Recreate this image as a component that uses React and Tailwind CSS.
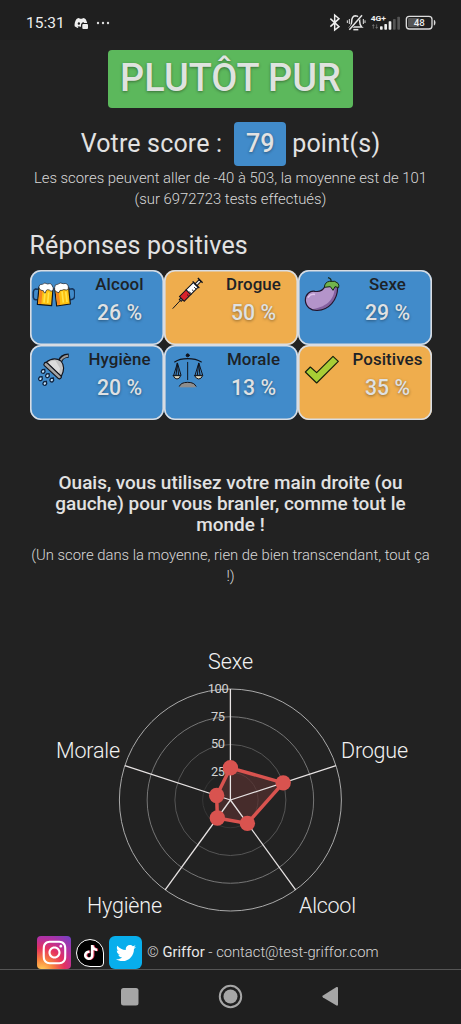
import React from "react";
import { FaTwitter, FaInstagram, FaTiktok, FaDiscord } from "react-icons/fa";

const ink = "#10131c";

const BeerIcon = () => (
  <svg viewBox="30 30 135 150" className="h-[50px] w-[45px] shrink-0">
    <g stroke={ink} strokeWidth="3.5" strokeLinejoin="round">
      <path d="M56 88 L46 87 Q41 88 40 96 L40 112 Q41 118 47 119 L54 119" fill="none" stroke="#14345c" strokeWidth="4.5" />
      <path d="M147 88 L157 86 Q163 87 164 95 L164 109 Q163 116 157 118 L150 119" fill="none" stroke="#14345c" strokeWidth="4.5" />
      <path d="M57 82 L99 86 L95 137 L52 133 Z" fill="#fdc211" />
      <path d="M104 86 L146 82 L151 132 L110 138 Z" fill="#fdc211" />
    </g>
    <path d="M59 90 L68 90 L64 132 L55 131 Z M107 95 L116 94 L121 134 L112 135 Z" fill="#f5871f" />
    <path d="M75 97 L72 128 M86 97 L83 129 M126 94 L130 128 M137 94 L141 126" stroke="#ffe34a" strokeWidth="5" />
    <path d="M57 84 Q56 72 67 73 Q74 66 83 72 Q94 68 97 78 Q102 83 99 91 Q93 97 88 90 Q82 87 78 92 L76 99 Q71 100 70 92 Q61 93 57 84 Z" fill="#fff" stroke={ink} strokeWidth="2" />
    <path d="M104 82 Q104 72 113 73 Q120 66 130 71 Q143 68 145 80 Q148 89 139 90 Q130 87 126 91 Q119 88 117 98 Q109 98 104 90 Z" fill="#fff" stroke={ink} strokeWidth="2" />
  </svg>
);

const SyringeIcon = () => (
  <svg viewBox="12 30 135 150" className="h-[50px] w-[45px] shrink-0">
    <path d="M38 146 L64 118" stroke={ink} strokeWidth="3" />
    <g transform="translate(62 120) rotate(-45)" stroke={ink} strokeWidth="3">
      <path d="M-2 -4 L6 -4 L6 4 L-2 4 Z" fill="#777" />
      <rect x="5" y="-10" width="28" height="20" fill="#d9232b" />
      <rect x="33" y="-10" width="31" height="20" fill="#fff" />
      <path d="M25 10 V2 M36 10 V1 M46 10 V2 M56 10 V1" strokeWidth="2.5" />
      <rect x="64" y="-4" width="18" height="8" fill="#eee" />
      <path d="M65 -14 V14 M83 -10 V10" strokeWidth="4" />
    </g>
  </svg>
);

const EggplantIcon = () => (
  <svg viewBox="24 30 135 150" className="h-[50px] w-[45px] shrink-0">
    <path d="M105 79 C99 92 88 96 75 94 C60 91 46 103 46 121 C47 141 63 152 82 151 C116 150 143 121 143 82 Z" fill="#b494ca" />
    <path d="M133 79 C137 114 112 141 70 147 C107 157 144 123 143 82 Z" fill="#84609f" />
    <path d="M55 111 Q62 101 73 103" fill="none" stroke="#dec2eb" strokeWidth="5" strokeLinecap="round" />
    <path d="M105 79 C99 92 88 96 75 94 C60 91 46 103 46 121 C47 141 63 152 82 151 C116 150 143 121 143 82" fill="none" stroke="#24152e" strokeWidth="3.5" />
    <path d="M103 82 Q104 66 119 64 Q137 61 144 70 Q148 75 146 83 L135 80 L129 91 L121 80 Z" fill="#72b34b" stroke="#152719" strokeWidth="3" strokeLinejoin="round" />
    <path d="M123 65 Q125 56 114 53" fill="none" stroke="#152719" strokeWidth="3.5" />
  </svg>
);

const ShowerIcon = () => (
  <svg viewBox="30 255 135 150" className="h-[50px] w-[45px] shrink-0">
    <path d="M120 305 Q124 287 146 287" fill="none" stroke={ink} strokeWidth="13" />
    <path d="M121 304 Q125 290 144 287" fill="none" stroke="#999" strokeWidth="6" />
    <path d="M78 307 Q102 288 123 303 Q138 321 124 349 Z" fill="#c4c4c4" stroke={ink} strokeWidth="3.5" />
    <path d="M84 309 Q96 300 107 303 L120 325 L117 340 Z" fill="#dcdcdc" />
    <path d="M73 310 Q76 305 82 309 L123 348 Q126 354 120 356 Q116 358 112 353 L73 317 Q70 314 73 310 Z" fill="#a4a4a4" stroke={ink} strokeWidth="3.5" />
    <g fill="#c3e3fa" stroke="#10233f" strokeWidth="4">
      {[[69, 334], [82, 347], [95, 360], [61, 356], [74, 370]].map(([x, y]) => (
        <path key={x} d={`M${x + 5} ${y - 6} L${x - 2} ${y - 5} Q${x - 8} ${y + 1} ${x - 3} ${y + 5} Q${x + 3} ${y + 8} ${x + 6} ${y + 1} Z`} />
      ))}
    </g>
  </svg>
);

const ScaleIcon = () => (
  <svg viewBox="12 255 135 150" className="h-[50px] w-[45px] shrink-0">
    <g stroke={ink} fill="none" strokeWidth="3" strokeLinecap="round">
      <circle cx="83" cy="286" r="4.5" fill={ink} />
      <path d="M44 306 Q59 296 83 296 Q108 296 124 306" strokeWidth="3.5" />
      <path d="M83 307 V359" />
      <path d="M52 310 L41 346 H62 Z M52 310 L48 346 M52 310 L56 346" />
      <path d="M116 310 L105 346 H127 Z M116 310 L112 346 M116 310 L120 346" />
      <path d="M40 347 H62 Q59 357 51 357 Q43 357 40 347 Z M104 347 H128 Q124 357 116 357 Q108 357 104 347 Z" fill="#ddd9c0" />
      <path d="M58 379 Q62 367 83 367 Q104 367 108 379" fill="#8d8d8d" />
    </g>
    <path d="M59 380 H107" stroke="#8d8d8d" strokeWidth="4" />
  </svg>
);

const CheckIcon = () => (
  <svg viewBox="24 255 135 150" className="h-[50px] w-[45px] shrink-0">
    <path d="M46 336 L61 321 L80 338 L129 289 L145 304 L80 369 Z" fill="#a7cd35" stroke="#18200c" strokeWidth="3.5" strokeLinejoin="round" />
  </svg>
);

const cells = [
  { name: "Alcool", value: 26, Icon: BeerIcon, tone: "bg-[#418bca]" },
  { name: "Drogue", value: 50, Icon: SyringeIcon, tone: "bg-[#efad4d]" },
  { name: "Sexe", value: 29, Icon: EggplantIcon, tone: "bg-[#418bca]" },
  { name: "Hygiène", value: 20, Icon: ShowerIcon, tone: "bg-[#418bca]" },
  { name: "Morale", value: 13, Icon: ScaleIcon, tone: "bg-[#418bca]" },
  { name: "Positives", value: 35, Icon: CheckIcon, tone: "bg-[#efad4d]" },
];

function StatusBar() {
  return (
    <header className="flex h-10 shrink-0 items-center bg-[#1f1f1f] pt-1.5 pr-[25px] pl-[26px] text-[#eee]">
      <span className="w-[38px] text-[15.5px] leading-5">15:31</span>
      <svg viewBox="0 0 15 13" className="ml-[10px] h-[13px] w-[15px]">
        <FaDiscord size={14} x="0" y="-1" color="#eee" />
        <rect x="7" y="6" width="8" height="7" rx="1.5" fill="#1f1f1f" />
        <rect x="8.3" y="7" width="5.7" height="5" rx="1" fill="#eee" />
      </svg>
      <svg viewBox="0 0 14 4" className="ml-[7px] h-1 w-3.5" fill="#ddd">
        <circle cx="2" cy="2" r="1.2" /><circle cx="7" cy="2" r="1.2" /><circle cx="12" cy="2" r="1.2" />
      </svg>
      <svg viewBox="298 40 322 58" className="ml-auto h-[19.33px] w-[107.33px]">
        <path d="M302 57 L328 81 L315 91 V46 L328 57 L302 81" fill="none" stroke="#eee" strokeWidth="4.5" />
        <g fill="none" stroke="#e5e5e5" strokeWidth="4.5">
          <path d="M361 82 H396 Q390 77 390 65 Q390 48 377 48 Q366 49 366 66 Q366 77 361 82 Z" />
          <path d="M371 90 H386" />
          <path d="M396 45 L358 90" stroke="#1f1f1f" strokeWidth="9" />
          <path d="M397 47 L359 90" />
          <path d="M359 58 V73 M353 62 V70 M401 58 V73 M406 62 V70" strokeWidth="3" />
        </g>
        <text x="423" y="65" fill="#eee" fontSize="24" fontWeight="700" textLength="46" lengthAdjust="spacingAndGlyphs" className="font-['Roboto',sans-serif]">4G+</text>
        <path d="M431 75 V87 M428 79 L431 75 L434 79 M441 74 V86 M438 82 L441 86 L444 82" fill="none" stroke="#888" strokeWidth="2" />
        <g fill="#eee">
          <rect x="451" y="80" width="8" height="10" rx="2" />
          <rect x="464" y="73" width="8" height="17" rx="2" />
          <rect x="477" y="65" width="8" height="25" rx="2" />
          <rect x="490" y="58" width="8" height="32" rx="2" fill="#555" />
          <rect x="503" y="51" width="8" height="39" rx="2" fill="#555" />
        </g>
        <rect x="530" y="50" width="77" height="38" rx="9" fill="none" stroke="#ddd" strokeWidth="4" />
        <path d="M538 55 H569 V83 H538 Q535 83 535 79 V59 Q535 55 538 55 Z" fill="#555" />
        <path d="M613 61 Q617 62 617 69 Q617 76 613 77 Z" fill="#ddd" stroke="#ddd" />
        <text x="569" y="79" textAnchor="middle" fill="#eee" fontSize="29" fontWeight="500" className="font-['Roboto',sans-serif]">48</text>
      </svg>
    </header>
  );
}

function RadarChart() {
  const cx = 230.4, cy = 169, R = 111;
  const values = [29, 50, 26, 20, 13];
  const at = (i, r) => {
    const a = ((-90 + 72 * i) * Math.PI) / 180;
    return [cx + Math.cos(a) * r, cy + Math.sin(a) * r];
  };
  const points = values.map((v, i) => at(i, (R * v) / 100));
  const labels = [
    ["Sexe", 208, 38, 45],
    ["Drogue", 341, 127, 67],
    ["Alcool", 299, 282, 57],
    ["Hygiène", 87, 282, 75],
    ["Morale", 56, 127, 64],
  ];
  return (
    <svg viewBox="0 0 461 300" className="h-[300px] w-[461px] shrink-0 font-['Roboto',sans-serif]">
      {[["#363636", 0.25], ["#555", 0.5], ["#767676", 0.75], ["#aaa", 1]].map(([c, f]) => (
        <circle key={f} cx={cx} cy={cy} r={R * f} fill="none" stroke={c} strokeWidth="1" />
      ))}
      {[["100", 207.7, 61.5, 21], ["75", 211, 89.5, 14], ["50", 211, 117.2, 14], ["25", 211, 145, 14]].map(([t, x, y, w]) => (
        <text key={t} x={x} y={y} textLength={w} fontSize="12.8" fill="#d4d4d4">{t}</text>
      ))}
      <polygon points={points.map((p) => p.join(",")).join(" ")} fill="#d9534f" fillOpacity="0.2" />
      {values.map((v, i) => {
        const [x, y] = at(i, R);
        return <line key={i} x1={cx} y1={cy} x2={x} y2={y} stroke="#e8e4e4" strokeWidth="1.3" />;
      })}
      <polygon points={points.map((p) => p.join(",")).join(" ")} fill="none" stroke="#d9534f" strokeWidth="3.5" />
      {points.map(([x, y], i) => (
        <circle key={i} cx={x} cy={y} r="7.7" fill="#d9534f" />
      ))}
      {labels.map(([t, x, y, w]) => (
        <text key={t} x={x} y={y} textLength={w} fontSize="21.5" fontWeight="300" fill="#f2f2f2">{t}</text>
      ))}
    </svg>
  );
}

export default function App() {
  return (
    <div className="flex h-[1024px] w-[461px] flex-col overflow-hidden bg-[#222] font-['Roboto',sans-serif] whitespace-nowrap text-[#e2e2e2]">
      <StatusBar />
      <main className="flex h-[929px] shrink-0 flex-col">
        <h1 className="mt-[10px] flex h-[58px] w-[245px] items-center justify-center self-center rounded-[4px] bg-[#5cb85c] text-[37.9px] leading-none font-medium text-[#dfe3df] [text-shadow:0_1px_3px_rgba(0,0,0,0.4)]">
          PLUTÔT PUR
        </h1>
        <div className="mt-[14px] flex h-[43px] items-center justify-center text-[25px] leading-none">
          <span className="tracking-[0.15px]">Votre score :</span>
          <span className="mr-[6px] ml-[12px] flex h-[44px] w-[52px] items-center justify-center rounded-[4px] bg-[#418bca] font-medium [text-shadow:0_1px_3px_rgba(0,0,0,0.4)]">79</span>
          <span className="tracking-[0.2px]">point(s)</span>
        </div>
        <p className="mt-[3px] text-center text-[14.85px] leading-[21px] font-light text-[#d8d8d8]">
          Les scores peuvent aller de -40 à 503, la moyenne est de 101
          <br />
          (sur 6972723 tests effectués)
        </p>
        <h2 className="mt-[22px] pl-[29.5px] text-[25px] leading-[28px] tracking-[0.15px]">Réponses positives</h2>
        <section className="mt-[10px] ml-[30px] grid w-[402px] grid-cols-3">
          {cells.map(({ name, value, Icon, tone }) => (
            <div key={name} className={`relative flex h-[75px] rounded-[11px] ${tone}`}>
              <Icon />
              <div className="flex flex-1 flex-col items-center pt-[3px] font-medium">
                <span className="text-[16.9px] leading-[22px] tracking-[0.1px] text-[#1d2227]">{name}</span>
                <span className="mt-[5px] text-[21.2px] leading-[26px] text-[#dfe1e3] [text-shadow:0_1px_3px_rgba(0,0,0,0.4)]">{value} %</span>
              </div>
              <div className="absolute inset-0 rounded-[11px] shadow-[inset_0_0_0_1.6px_#d8dce2]" />
            </div>
          ))}
        </section>
        <h3 className="mt-[52px] text-center text-[18.95px] leading-[21px] font-medium">
          Ouais, vous utilisez votre main droite (ou
          <br />
          gauche) pour vous branler, comme tout le
          <br />
          monde !
        </h3>
        <p className="mt-[10px] text-center text-[14.85px] leading-[21px] font-light text-[#d8d8d8]">
          (Un score dans la moyenne, rien de bien transcendant, tout ça
          <br />
          !)
        </p>
        <div className="mt-[44px] h-[300px]"><RadarChart /></div>
        <footer className="mt-[5px] flex h-[33px] items-center pl-[37px]">
          <span className="flex h-[33px] w-[34px] items-center justify-center rounded-[4px] bg-[radial-gradient(circle_at_15%_105%,#ffd35c_0%,#f8823e_25%,#e5315f_50%,#b431a2_72%,#6c43c9_100%)]">
            <FaInstagram size={27} color="#fff" />
          </span>
          <span className="ml-[5px] flex h-7 w-7 items-center justify-center rounded-[14px] rounded-br-[4px] border border-white bg-black">
            <FaTiktok size={15} color="#fff" className="drop-shadow-[1px_0.5px_0_#e93558]" />
          </span>
          <span className="ml-[5px] flex h-[33px] w-[33px] items-center justify-center rounded-[6px] bg-[#08aeec]">
            <FaTwitter size={20} color="#fff" />
          </span>
          <span className="ml-[5px] text-[14.75px] font-light text-[#d8d8d8]">
            © <span className="font-normal text-[#e8e8e8]">Griffor</span> - contact@test-griffor.com
          </span>
        </footer>
      </main>
      <nav className="h-[55px] shrink-0 border-t border-[#555] bg-[#1f1f1f]">
        <svg viewBox="0 0 461 54" className="h-[54px] w-[461px]" fill="#a6a6a6">
          <rect x="121" y="18" width="17.5" height="17.5" rx="2.5" />
          <circle cx="230.5" cy="26.500" r="10.7" fill="none" stroke="#a6a6a6" strokeWidth="2" />
          <circle cx="230.5" cy="26.500" r="7" />
          <path d="M323 25.500 L336.500 17 Q338 16.500 338 18 V34.500 Q338 36 336.500 35.500 L323 27.500 Q321.500 26.500 323 25.500 Z" />
        </svg>
      </nav>
    </div>
  );
}
